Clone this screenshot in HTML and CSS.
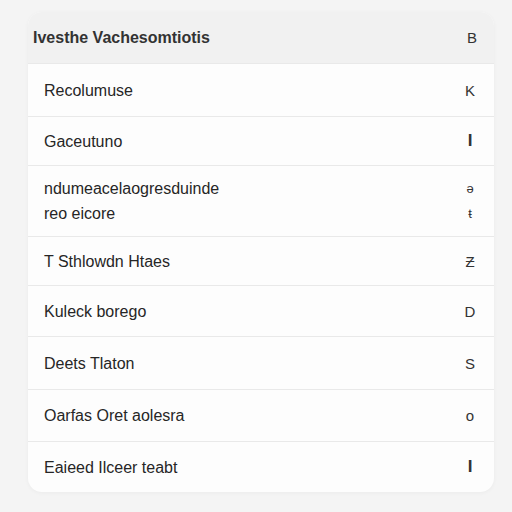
FILE: index.html
```html
<!DOCTYPE html>
<html>
<head>
<meta charset="utf-8">
<link rel="stylesheet" href="styles.css">
</head>
<body>
<div class="card">
  <div class="header">
    <span class="title">Ivesthe Vachesomtiotis</span>
    <span class="icon">B</span>
  </div>
  <div class="row wide"><span class="label">Recolumuse</span><span class="icon">K</span></div>
  <div class="row short"><span class="label">Gaceutuno</span><span class="icon bar">I</span></div>
  <div class="row tall">
    <span class="label">ndumeacelaogresduinde<br>reo eicore</span>
    <span class="icon stack"><span>ə</span><span>ŧ</span></span>
  </div>
  <div class="row short"><span class="label">T Sthlowdn Htaes</span><span class="icon">Ƶ</span></div>
  <div class="row small"><span class="label">Kuleck borego</span><span class="icon">D</span></div>
  <div class="row wide"><span class="label">Deets Tlaton</span><span class="icon">S</span></div>
  <div class="row"><span class="label">Oarfas Oret aolesra</span><span class="icon">o</span></div>
  <div class="row small"><span class="label">Eaieed Ilceer teabt</span><span class="icon bar">I</span></div>
</div>
</body>
</html>
```
FILE: styles.css
```css
html, body {
  margin: 0;
  background: #f4f4f4;
}
body {
  padding: 12px 18px 20px 28px;
  font-family: "Liberation Sans", Arial, sans-serif;
  color: #2b2b2b;
}
.card {
  background: #fdfdfd;
  border-radius: 14px;
  box-shadow: 0 1px 4px rgba(0,0,0,0.04);
  overflow: hidden;
}
.header {
  background: #f1f1f1;
  height: 51px;
  display: flex;
  align-items: center;
  justify-content: space-between;
  padding: 0 16px 0 5px;
}
.title {
  font-size: 16px;
  font-weight: bold;
  color: #333;
}
.row {
  display: flex;
  align-items: center;
  justify-content: space-between;
  height: 51px;
  padding: 0 18px 0 16px;
  border-top: 1px solid #e9e9e9;
}
.row.short {
  height: 48px;
}
.row.small {
  height: 50px;
}
.row.wide {
  height: 52px;
}
.row.tall {
  height: 70px;
}
.label {
  font-size: 16px;
  line-height: 25px;
  color: #262626;
}
.icon {
  font-size: 15px;
  color: #333;
  width: 12px;
  text-align: center;
}
.icon.bar {
  font-weight: bold;
  font-size: 17px;
}
.stack {
  display: flex;
  flex-direction: column;
  line-height: 25px;
  font-size: 13px;
}
```
